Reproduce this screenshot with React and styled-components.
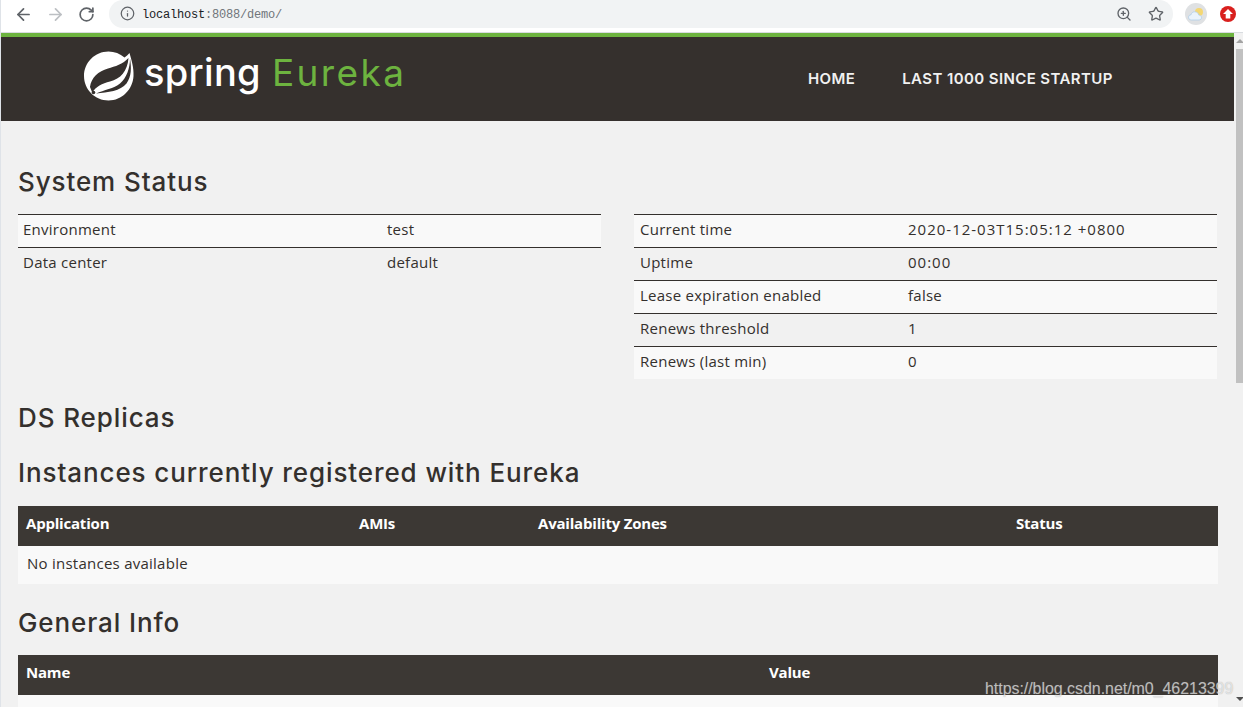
import React from "react";
import styled, { createGlobalStyle } from "styled-components";
import { ArrowLeft, ArrowRight, RotateCw, Info, ZoomIn, Star } from "lucide-react";

const GlobalStyle = createGlobalStyle`
  html, body {
    margin: 0;
    padding: 0;
    overflow: hidden;
  }
  * {
    box-sizing: border-box;
  }
`;

const statusLeft = [
  ["Environment", "test"],
  ["Data center", "default"],
];

const statusRight = [
  ["Current time", "2020-12-03T15:05:12 +0800"],
  ["Uptime", "00:00"],
  ["Lease expiration enabled", "false"],
  ["Renews threshold", "1"],
  ["Renews (last min)", "0"],
];

const SpringLeaf = () => (
  <svg width="52" height="51" viewBox="0 0 52 51">
    <path
      fill="#fff"
      d="M45.500 3C47.500 10 50 18 49.500 26 48.800 39.500 38 50.500 24.500 50.500 11 50.500 0 39.500 0 26 0 12.500 11 1.500 24.500 1.500c6 0 11.500 2.200 16 6 1.800-1.300 3.500-2.800 5-4.500Z"
    />
    <path
      fill="#35302d"
      d="M44.500 8C39 14 31 16.500 24 18.500 14.500 21 7 28 6 37l2.200 5.500C12 36.500 18 33.500 26 31.500 36.500 29 43.500 21 44.500 8Z"
    />
    <path
      fill="#35302d"
      d="M46 8.500C47.500 18 47.500 26.500 42.500 33.500 36.500 41 24 42.500 12 43.500 20 40 30 38.500 36 33.500 42.500 28 46 18.500 46 8.500Z"
    />
    <circle cx="9.500" cy="42.500" r="1.800" fill="#35302d" />
  </svg>
);

const isNumeric = (value) => /\d/.test(value);

const App = () => (
  <Root>
    <GlobalStyle />
    <BrowserBar>
      <NavIcons>
        <ArrowLeft size={19} color="#5f6368" strokeWidth={2.2} />
        <ArrowRight size={19} color="#bcbfc3" strokeWidth={2.2} />
        <RotateCw size={17} color="#5f6368" strokeWidth={2.4} />
      </NavIcons>
      <Omnibox>
        <Info size={15} color="#5f6368" strokeWidth={2} />
        <Url>
          <Host>localhost</Host>:8088/demo/
        </Url>
        <OmniboxEnd>
          <ZoomIn size={16} color="#5f6368" strokeWidth={2} />
          <Star size={16} color="#5f6368" strokeWidth={2} />
        </OmniboxEnd>
      </Omnibox>
      <Extensions>
        <WeatherBadge>
          <svg width="16" height="14" viewBox="0 0 16 14">
            <circle cx="11" cy="5" r="4" fill="#f4d774" />
            <path
              fill="#eaf3fb"
              stroke="#a9cbe8"
              strokeWidth="0.7"
              d="M3.500 13C1.500 13 .5 11.700.5 10.300.5 8.800 1.700 7.800 3 7.800 3.500 5.800 5 4.800 6.800 4.800c2.200 0 3.700 1.500 4 3.300 1.500 0 2.700 1.100 2.700 2.500S12.400 13 11 13Z"
            />
          </svg>
        </WeatherBadge>
        <UploadBadge>
          <svg width="10" height="10" viewBox="0 0 10 10">
            <path fill="#fff" d="M5 0 10 5H7.300V9.500H2.700V5H0Z" />
          </svg>
        </UploadBadge>
      </Extensions>
    </BrowserBar>
    <Viewport>
      <Page>
        <Navbar>
          <Brand>
            <SpringLeaf />
            <BrandSpring>spring</BrandSpring>
            <BrandEureka>Eureka</BrandEureka>
          </Brand>
          <NavLinks>
            <NavLink>HOME</NavLink>
            <NavLink>LAST 1000 SINCE STARTUP</NavLink>
          </NavLinks>
        </Navbar>
        <Content>
          <StatusTitle>System Status</StatusTitle>
          <StatusColumns>
            <StatusTable $labelWidth={364} $inset={5}>
              <tbody>
                {statusLeft.map(([label, value]) => (
                  <tr key={label}>
                    <td>{label}</td>
                    <td>{value}</td>
                  </tr>
                ))}
              </tbody>
            </StatusTable>
            <StatusTable $labelWidth={268} $inset={6}>
              <tbody>
                {statusRight.map(([label, value]) => (
                  <tr key={label}>
                    <td>{label}</td>
                    <td>
                      <StatusValue $numeric={isNumeric(value)}>{value}</StatusValue>
                    </td>
                  </tr>
                ))}
              </tbody>
            </StatusTable>
          </StatusColumns>
          <ReplicasTitle>DS Replicas</ReplicasTitle>
          <SectionTitle>Instances currently registered with Eureka</SectionTitle>
          <DataTable>
            <thead>
              <tr>
                <HeadCell $width={333}>Application</HeadCell>
                <HeadCell $width={179}>AMIs</HeadCell>
                <HeadCell $width={478}>Availability Zones</HeadCell>
                <HeadCell>Status</HeadCell>
              </tr>
            </thead>
            <tbody>
              <tr>
                <BodyCell colSpan={4}>No instances available</BodyCell>
              </tr>
            </tbody>
          </DataTable>
          <InfoTitle>General Info</InfoTitle>
          <DataTable>
            <thead>
              <tr>
                <HeadCell $width={743}>Name</HeadCell>
                <HeadCell>Value</HeadCell>
              </tr>
            </thead>
            <tbody>
              <tr>
                <BodyCell colSpan={2}>&nbsp;</BodyCell>
              </tr>
            </tbody>
          </DataTable>
        </Content>
      </Page>
      <Scrollbar>
        <ScrollArrow $up />
        <ScrollThumb />
        <ScrollTrack />
        <ScrollArrow />
      </Scrollbar>
    </Viewport>
    <Watermark>https://blog.csdn.net/m0_46213399</Watermark>
  </Root>
);

export default App;

const Root = styled.div`
  position: relative;
  width: 1243px;
  height: 707px;
  overflow: hidden;
  display: flex;
  flex-direction: column;
  background: #f1f1f1;
  font-family: "Open Sans", "Liberation Sans", sans-serif;
`;

const BrowserBar = styled.div`
  flex: none;
  height: 33px;
  display: flex;
  align-items: center;
  background: #fff;
  border-left: 1px solid #dfe3e8;
  border-bottom: 1px solid #d9dce0;
  padding-left: 13px;
`;

const NavIcons = styled.div`
  display: flex;
  align-items: center;
  gap: 13px;
  margin-top: -4px;
`;

const Omnibox = styled.div`
  width: 1064px;
  height: 28px;
  margin: -5px 0 0 14px;
  padding: 0 9px 0 11px;
  border-radius: 14px;
  background: #f1f3f4;
  display: flex;
  align-items: center;
`;

const Url = styled.span`
  margin: 2px 0 0 7px;
  font-family: "Liberation Mono", "DejaVu Sans Mono", monospace;
  font-size: 12px;
  letter-spacing: -0.2px;
  color: #70757a;
`;

const Host = styled.span`
  color: #202124;
`;

const OmniboxEnd = styled.div`
  margin-left: auto;
  display: flex;
  align-items: center;
  gap: 16px;
`;

const Extensions = styled.div`
  display: flex;
  align-items: center;
  gap: 13px;
  margin: -5px 0 0 12px;
`;

const WeatherBadge = styled.div`
  width: 22px;
  height: 22px;
  border-radius: 50%;
  background: #dfe1e3;
  display: flex;
  align-items: center;
  justify-content: center;
`;

const UploadBadge = styled.div`
  width: 16px;
  height: 16px;
  border-radius: 50%;
  background: #d9201e;
  display: flex;
  align-items: center;
  justify-content: center;
`;

const Viewport = styled.div`
  flex: 1;
  min-height: 0;
  display: flex;
`;

const Page = styled.div`
  flex: 1;
  min-width: 0;
  border-left: 1px solid #dfe3e8;
  overflow: hidden;
`;

const Navbar = styled.div`
  height: 88px;
  background: #35302d;
  border-top: 4px solid #6db33f;
  display: flex;
  align-items: center;
`;

const Brand = styled.div`
  display: flex;
  align-items: center;
  margin: -8px 0 0 83px;
  width: 724px;
`;

const BrandSpring = styled.span`
  margin: 0 0 6px 8px;
  font-family: "Inter", sans-serif;
  font-size: 38px;
  font-weight: 500;
  letter-spacing: 0.3px;
  color: #fff;
`;

const BrandEureka = styled.span`
  margin: 0 0 6px 11px;
  font-family: "Inter", sans-serif;
  font-size: 37px;
  font-weight: 400;
  letter-spacing: 2.4px;
  color: #6db33f;
`;

const NavLinks = styled.div`
  display: flex;
  gap: 47px;
  margin-top: -2px;
`;

const NavLink = styled.span`
  font-family: "Inter", sans-serif;
  font-size: 15px;
  font-weight: 600;
  letter-spacing: 0.4px;
  color: #f1f1f1;
`;

const Content = styled.div`
  padding: 0 16px 0 17px;
  color: #34302d;
`;

const Title = styled.h1`
  margin: 0 0 -1px;
  font-family: "Inter", sans-serif;
  font-size: 26px;
  font-weight: 500;
  line-height: 32px;
  letter-spacing: 0.9px;
  color: #34302d;
`;

const StatusTitle = styled(Title)`
  padding-top: 45px;
`;

const ReplicasTitle = styled(Title)`
  padding-top: 23px;
`;

const SectionTitle = styled(Title)`
  padding-top: 24px;
  padding-bottom: 1px;
`;

const InfoTitle = styled(Title)`
  padding-top: 23px;
`;

const StatusColumns = styled.div`
  display: grid;
  grid-template-columns: 583px 583px;
  column-gap: 33px;
  align-items: start;
  margin-top: 17px;
`;

const StatusTable = styled.table`
  width: 100%;
  border-collapse: collapse;
  table-layout: fixed;
  font-size: 15px;
  letter-spacing: 0.25px;

  td {
    height: 33px;
    padding: 0 5px 4px ${(p) => p.$inset}px;
    border-top: 1px solid #34302d;
  }
  td:first-child {
    width: ${(p) => p.$labelWidth}px;
  }
  tr:nth-child(odd) {
    background: #f9f9f9;
  }
  tr:last-child td {
    height: 32px;
  }
`;

const StatusValue = styled.span`
  letter-spacing: ${(p) => (p.$numeric ? "1px" : "0.25px")};
`;

const DataTable = styled.table`
  width: 100%;
  margin-top: 17px;
  border-collapse: collapse;
  table-layout: fixed;
`;

const HeadCell = styled.th`
  height: 40px;
  padding: 0 8px 5px;
  background: #3c3834;
  color: #fff;
  font-size: 15px;
  font-weight: 700;
  letter-spacing: -0.2px;
  text-align: left;
  width: ${(p) => (p.$width ? `${p.$width}px` : "auto")};
`;

const BodyCell = styled.td`
  height: 38px;
  padding: 0 9px 4px;
  background: #f9f9f9;
  font-size: 15px;
  letter-spacing: 0.25px;
`;

const Scrollbar = styled.div`
  flex: none;
  width: 9px;
  display: flex;
  flex-direction: column;
  background: #f1f1f1;
`;

const ScrollArrow = styled.div`
  flex: none;
  height: 16px;
  padding-left: 2px;
  display: flex;
  align-items: center;
  justify-content: center;

  &::before {
    content: "";
    border-left: 4px solid transparent;
    border-right: 4px solid transparent;
    ${(p) => (p.$up ? "border-bottom: 4px solid #a3a3a3;" : "border-top: 4px solid #505050;")}
  }
`;

const ScrollThumb = styled.div`
  flex: none;
  height: 334px;
  margin-left: 2px;
  background: #c1c1c1;
`;

const ScrollTrack = styled.div`
  flex: 1;
`;

const Watermark = styled.div`
  position: absolute;
  left: 985px;
  top: 680px;
  font-family: "Liberation Sans", Arial, sans-serif;
  font-size: 16px;
  line-height: 18px;
  letter-spacing: -0.05px;
  white-space: nowrap;
  color: rgba(255, 255, 255, 0.62);
  text-shadow: 0 0 1px rgba(120, 120, 120, 0.6);
`;
